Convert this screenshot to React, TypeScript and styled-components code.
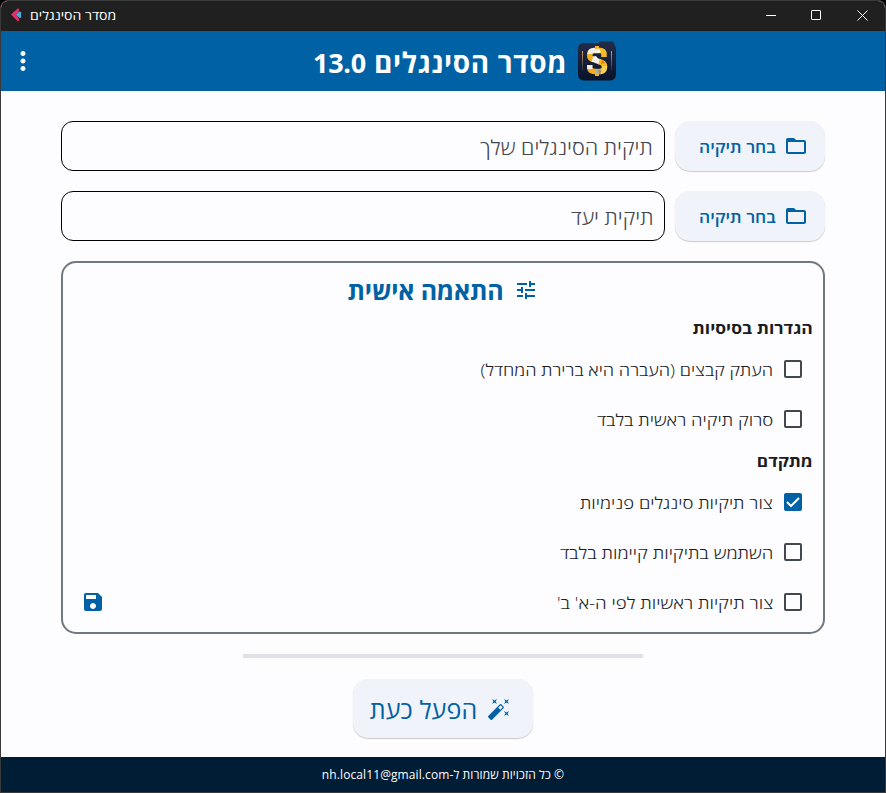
import React, { useState } from "react";
import styled, { createGlobalStyle } from "styled-components";
import { MdMoreVert, MdFolderOpen, MdTune, MdSave, MdAutoFixHigh } from "react-icons/md";

const BLUE = "#0061a4";

const GlobalStyle = createGlobalStyle`
  * { box-sizing: border-box; }
  body { margin: 0; background: #000; }
  button, input { font-family: inherit; }
`;

const Window = styled.div`
  display: flex;
  flex-direction: column;
  width: 886px;
  height: 793px;
  border: 1px solid #3a3a3a;
  border-radius: 8px 8px 0 0;
  overflow: hidden;
  background: #fdfcff;
  font-family: "Open Sans", "Noto Sans", sans-serif;
  direction: rtl;
`;

const TitleBar = styled.div`
  display: flex;
  direction: ltr;
  align-items: center;
  justify-content: space-between;
  height: 30px;
  padding: 0 17px 2px 9px;
  background: #202020;
  flex: none;
`;

const TitleGroup = styled.div`
  display: flex;
  align-items: center;
  gap: 7px;
`;

const Text = styled.span<{ $spacing?: number; $shift?: number; $stretch?: number }>`
  display: inline-block;
  white-space: nowrap;
  letter-spacing: ${(p) => p.$spacing ?? 0}px;
  padding-top: ${(p) => p.$shift ?? 0}px;
  transform: ${(p) => (p.$stretch ? `scaleX(${p.$stretch})` : "none")};
  transform-origin: right center;
`;

const TitleText = styled(Text)`
  padding-top: 2px;
  font-size: 12px;
  line-height: 16px;
  color: #fff;
  transform-origin: left center;
`;

const Controls = styled.div`
  display: flex;
  align-items: center;
  gap: 35px;
`;

const Header = styled.header`
  display: grid;
  grid-template-columns: 1fr 44px;
  align-items: center;
  height: 60px;
  background: ${BLUE};
  color: #fff;
  flex: none;
`;

const Brand = styled.h1`
  display: flex;
  align-items: center;
  justify-content: center;
  gap: 11px;
  margin: 0;
  font-size: 28px;
  line-height: 36px;
  font-weight: 700;
`;

const Version = styled.span`
  font-size: 27px;
  letter-spacing: -0.2px;
`;

const MenuButton = styled.button`
  display: grid;
  place-items: center;
  width: 44px;
  height: 60px;
  padding: 0;
  border: 0;
  background: none;
  color: inherit;
`;

const Body = styled.main`
  display: flex;
  flex-direction: column;
  align-items: center;
  flex: 1;
  padding: 30px 60px 0;
`;

const PickerRow = styled.div`
  display: flex;
  gap: 10px;
  width: 764px;
  margin-bottom: 20px;
`;

const SoftButton = styled.button<{ $large?: boolean }>`
  display: flex;
  align-items: center;
  justify-content: center;
  gap: ${(p) => (p.$large ? 10 : 8)}px;
  width: ${(p) => (p.$large ? 180 : 150)}px;
  height: ${(p) => (p.$large ? 59 : 50)}px;
  padding: ${(p) => (p.$large ? "0 5px 0 0" : "0 0 1px 13px")};
  border: 0;
  border-radius: 15px;
  background: #f0f3fa;
  box-shadow: 0 1px 1px rgba(0, 0, 0, 0.2);
  color: ${BLUE};
  font-size: ${(p) => (p.$large ? 25 : 16)}px;
  font-weight: ${(p) => (p.$large ? 500 : 600)};
  flex: none;
`;

const Field = styled.div`
  display: flex;
  align-items: center;
  flex: 1;
  height: 50px;
  padding: 0 11px;
  border: 1px solid #000;
  border-radius: 12px;
  color: #43474e;
  font-size: 20px;
  font-weight: 300;
`;

const Panel = styled.section`
  width: 764px;
  height: 373px;
  padding: 8px 10px 0;
  border: 2px solid #73777f;
  border-radius: 15px;
`;

const PanelTitle = styled.h2`
  display: flex;
  align-items: center;
  justify-content: center;
  gap: 11px;
  height: 40px;
  margin: 0;
  padding-bottom: 2px;
  color: ${BLUE};
  font-size: 25px;
  font-weight: 700;
`;

const GroupTitle = styled.h3`
  display: flex;
  align-items: center;
  height: 33px;
  margin: 0;
  color: #1a1c1e;
  font-size: 16px;
  font-weight: 700;
`;

const OptionRow = styled.div`
  display: flex;
  align-items: center;
  justify-content: space-between;
  height: 50px;
  padding: 0 11px 0 8px;
`;

const Option = styled.label`
  display: flex;
  align-items: center;
  gap: 11px;
  color: #1a1c1e;
  font-size: 16px;
  font-weight: 300;
`;

const HiddenInput = styled.input`
  appearance: none;
  width: 0;
  height: 0;
  margin: 0 0 0 -11px;
`;

const Box = styled.span<{ $on: boolean }>`
  display: grid;
  place-items: center;
  width: 18px;
  height: 18px;
  border: 2px solid ${(p) => (p.$on ? BLUE : "#43474e")};
  border-radius: 2px;
  background: ${(p) => (p.$on ? BLUE : "transparent")};
`;

const SaveButton = styled.button`
  display: grid;
  place-items: center;
  width: 24px;
  height: 24px;
  padding: 0;
  border: 0;
  background: none;
  color: ${BLUE};
`;

const Progress = styled.div`
  width: 400px;
  height: 4px;
  margin: 20px 0 21px;
  background: #e0e1e8;
  flex: none;
`;

const Footer = styled.footer`
  display: flex;
  align-items: center;
  justify-content: center;
  height: 35px;
  padding: 0 0 1px;
  background: #001d36;
  color: #fff;
  font-size: 12px;
  flex: none;
`;

const AppMark = () => (
  <svg width="13" height="14" viewBox="0 0 13 14">
    <path d="M1 6.6 7.4.8c.9-.7 1.7-.1 1.6.9L8.6 4 6 6.8 8.7 10l.3 2.2c0 1-.9 1.3-1.6.7Z" fill="#ec2d65" />
    <path d="M6 6.8 9.4 3.6 11.2 4v5.8l-1.8.2Z" fill="#4fa8dd" />
  </svg>
);

const Logo = () => (
  <svg width="39" height="40" viewBox="0 0 39 40">
    <defs>
      <linearGradient id="tile" x1="0" y1="0" x2="0" y2="1">
        <stop offset="0" stopColor="#232d4a" />
        <stop offset="1" stopColor="#0a1229" />
      </linearGradient>
      <linearGradient id="beam" x1="0" y1="0" x2="0" y2="1">
        <stop offset="0" stopColor="#d8a64a" />
        <stop offset="1" stopColor="#1a2748" />
      </linearGradient>
    </defs>
    <path d="M6 2h14l2-1.500h12q2 0 2.300 3L38 7v26q0 6-6 6.500H6Q0 39 0 33V8Q0 2 6 2Z" fill="url(#tile)" />
    <path d="M4 10h1v20H4zM33 10h1v20h-1z" fill="url(#beam)" />
    <g fill="none" strokeWidth="5.500">
      <path d="M26 16v-2.500q0-4-4-4h-2" stroke="#f7bd25" />
      <path d="M20 9.500h-4q-4 0-4.300 4" stroke="#f3ede0" />
      <path d="M11.700 13v1.500q0 3 3.800 4" stroke="#f2b01e" />
      <path d="m14.500 18 7.500 3" stroke="#f6f1e4" />
      <path d="M21 20.500q5.500 1.300 5.500 5" stroke="#f5b820" />
      <path d="M26.500 25v1q0 4-4 4.500" stroke="#f6cf54" />
      <path d="M23 30.500h-5" stroke="#a5aeb9" />
      <path d="M18 30.500q-6 0-6.200-3.500" stroke="#f5ae19" />
      <path d="M11.800 28v-4" stroke="#efeee9" />
    </g>
    <path d="M17 5h4v3h-4zM17 33h4v2h-4z" fill="#f4b526" />
    <path d="m20 7 3 4-3 1zM14 16l4-1 2 3z" fill="#fff" />
    <path d="m24 19 3 3-4 1zM20 29l4 1-3 3z" fill="#d9820f" />
  </svg>
);

type Item = { text: string; stretch: number };

const basic: Item[] = [
  { text: "העתק קבצים (העברה היא ברירת המחדל)", stretch: 1.138 },
  { text: "סרוק תיקיה ראשית בלבד", stretch: 1.158 },
];

const advanced: Item[] = [
  { text: "צור תיקיות סינגלים פנימיות", stretch: 1.156 },
  { text: "השתמש בתיקיות קיימות בלבד", stretch: 1.164 },
  { text: "צור תיקיות ראשיות לפי ה-א' ב'", stretch: 1.168 },
];

const folders: Item[] = [
  { text: "תיקית הסינגלים שלך", stretch: 1.08 },
  { text: "תיקית יעד", stretch: 1.078 },
];

function CheckOption({ item, initial = false }: { item: Item; initial?: boolean }) {
  const [on, setOn] = useState(initial);
  return (
    <Option>
      <HiddenInput type="checkbox" checked={on} onChange={() => setOn(!on)} />
      <Box $on={on}>
        {on && (
          <svg width="14" height="14" viewBox="0 0 14 14">
            <path d="m1 7 4 4 8-8" fill="none" stroke="#fff" strokeWidth="2" />
          </svg>
        )}
      </Box>
      <Text $stretch={item.stretch} $shift={2}>{item.text}</Text>
    </Option>
  );
}

export default function App() {
  return (
    <>
      <GlobalStyle />
      <Window>
        <TitleBar>
          <TitleGroup>
            <AppMark />
            <TitleText dir="rtl" $stretch={1.17}>מסדר הסינגלים</TitleText>
          </TitleGroup>
          <Controls>
            <svg width="10" height="11"><path d="M0 5.500h10" stroke="#fff" /></svg>
            <svg width="11" height="10"><rect x=".5" y=".5" width="9" height="9" rx=".5" fill="none" stroke="#fff" /></svg>
            <svg width="11" height="11"><path d="m.5.5 10 10m0-10-10 10" stroke="#fff" /></svg>
          </Controls>
        </TitleBar>
        <Header>
          <Brand>
            <Logo />
            <Text $spacing={0.65} $shift={3}>מסדר הסינגלים <Version>13.0</Version></Text>
          </Brand>
          <MenuButton aria-label="תפריט"><MdMoreVert size={30} /></MenuButton>
        </Header>
        <Body>
          {folders.map((f) => (
            <PickerRow key={f.text}>
              <SoftButton>
                <MdFolderOpen size={24} />
                <Text $stretch={1.085} $shift={2}>בחר תיקיה</Text>
              </SoftButton>
              <Field><Text $stretch={f.stretch} $shift={2}>{f.text}</Text></Field>
            </PickerRow>
          ))}
          <Panel>
            <PanelTitle>
              <MdTune size={24} />
              <Text $spacing={-0.2}>התאמה אישית</Text>
            </PanelTitle>
            <GroupTitle><Text $stretch={1.095} $shift={1}>הגדרות בסיסיות</Text></GroupTitle>
            {basic.map((item) => (
              <OptionRow key={item.text}><CheckOption item={item} /></OptionRow>
            ))}
            <GroupTitle><Text $stretch={1.08} $shift={1}>מתקדם</Text></GroupTitle>
            {advanced.map((item, i) => (
              <OptionRow key={item.text}>
                <CheckOption item={item} initial={i === 0} />
                {i === 2 && <SaveButton aria-label="שמור"><MdSave size={24} /></SaveButton>}
              </OptionRow>
            ))}
          </Panel>
          <Progress />
          <SoftButton $large>
            <MdAutoFixHigh size={24} />
            <Text $spacing={0.1}>הפעל כעת</Text>
          </SoftButton>
        </Body>
        <Footer><Text $spacing={0.1}>© כל הזכויות שמורות ל-nh.local11@gmail.com</Text></Footer>
      </Window>
    </>
  );
}
